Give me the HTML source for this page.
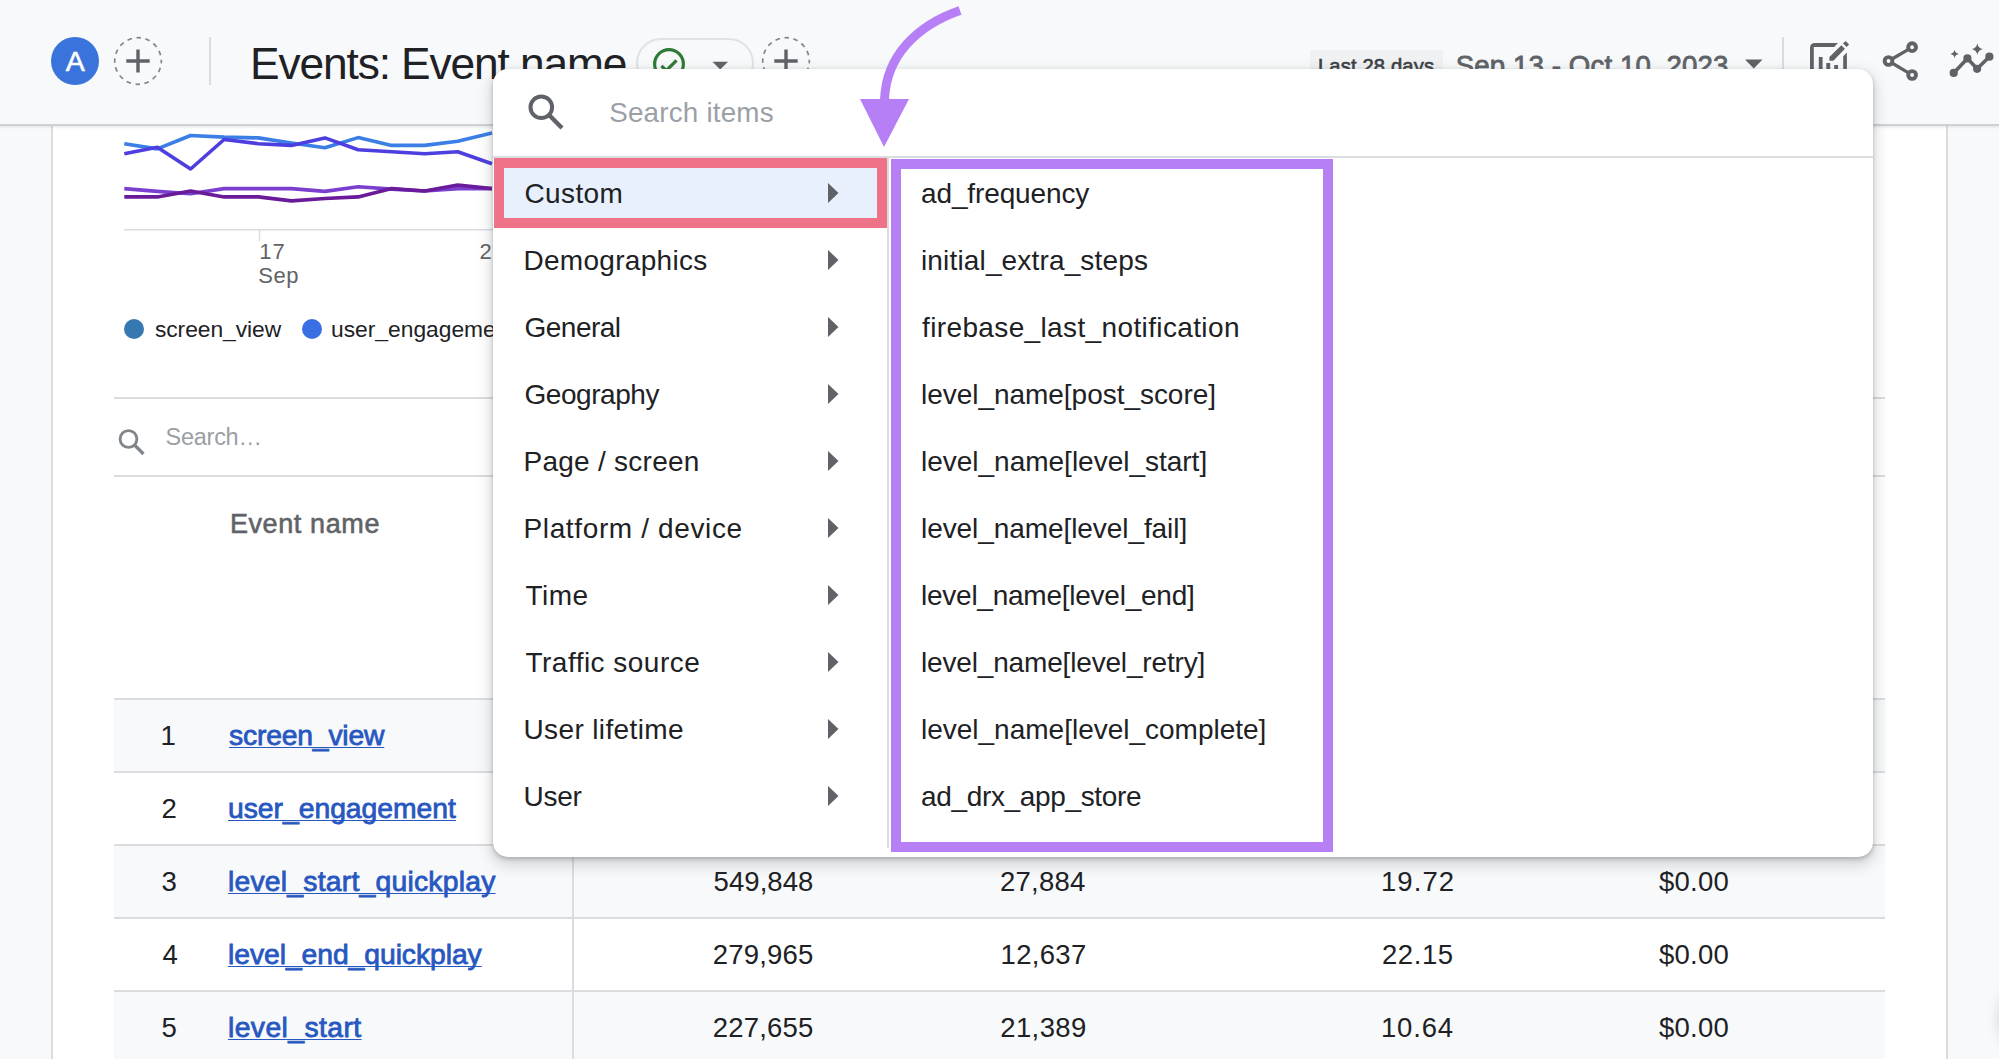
<!DOCTYPE html>
<html><head><meta charset="utf-8"><title>Events: Event name</title>
<style>
html,body{margin:0;padding:0;}
body{width:1999px;height:1059px;overflow:hidden;position:relative;background:#f8f9fa;font-family:"Liberation Sans", sans-serif;}
.t{position:absolute;line-height:1;white-space:nowrap;}
.r{position:absolute;}
</style></head><body>
<div class="r" style="left:0px;top:0px;width:1999px;height:124px;background:#f8f9fa"></div>
<div class="r" style="left:51px;top:125px;width:1897px;height:934px;background:#fff;border-left:2px solid #dadce0;border-right:2px solid #dadce0;box-sizing:border-box"></div>
<div class="r" style="left:0px;top:124px;width:1999px;height:2px;background:#cfd1d3"></div>
<div class="r" style="left:0px;top:126px;width:1999px;height:3px;background:linear-gradient(rgba(60,64,67,.10),rgba(60,64,67,0))"></div>
<div class="r" style="left:51px;top:37px;width:48px;height:48px;background:#3a73dc;border-radius:50%"></div>
<div class="t" style="left:65.70px;top:46.97px;font-size:28.5px;color:#fff;font-weight:normal;letter-spacing:0.000px;-webkit-text-stroke:0.6px #fff">A</div>
<svg class="r" style="left:112px;top:35px" width="52" height="52" viewBox="0 0 52 52"><circle cx="26" cy="26" r="23.3" fill="none" stroke="#80868b" stroke-width="1.7" stroke-dasharray="4.6 4.55" stroke-dashoffset="2.3"/><path d="M14.3 26H37.7M26 14.5V37.5" stroke="#5f6368" stroke-width="3.4"/></svg>
<div class="r" style="left:209px;top:37px;width:2px;height:48px;background:#dadce0"></div>
<div class="t" style="left:250.00px;top:42.19px;font-size:44.3px;color:#202124;font-weight:normal;letter-spacing:-1.123px;">Events: Event name</div>
<div class="r" style="left:636px;top:38px;width:118px;height:50px;border:2px solid #e0e2e5;border-radius:25px;box-sizing:border-box"></div>
<svg class="r" style="left:650px;top:45px" width="40" height="40" viewBox="0 0 40 40"><circle cx="19" cy="19" r="14.4" fill="none" stroke="#2f7a35" stroke-width="3.2"/><path d="M11.5 20.8l4.8 4.8 10.2-10.2" fill="none" stroke="#2f7a35" stroke-width="3.3"/></svg>
<svg class="r" style="left:712px;top:61px" width="17" height="9" viewBox="0 0 17 9"><path d="M0.5 0.8H16L8.2 8.5z" fill="#5f6368"/></svg>
<svg class="r" style="left:759.5px;top:35px" width="52" height="52" viewBox="0 0 52 52"><circle cx="26" cy="26" r="23.3" fill="none" stroke="#80868b" stroke-width="1.7" stroke-dasharray="4.6 4.55" stroke-dashoffset="2.3"/><path d="M14.3 26H37.7M26 14.5V37.5" stroke="#5f6368" stroke-width="3.4"/></svg>
<div class="r" style="left:1310px;top:50px;width:133px;height:40px;background:#f0f1f3"></div>
<div class="t" style="left:1317.90px;top:55.90px;font-size:20.2px;color:#3c4043;font-weight:normal;letter-spacing:0.157px;-webkit-text-stroke:0.6px #3c4043">Last 28 days</div>
<div class="t" style="left:1455.70px;top:51.63px;font-size:27.6px;color:#5f6368;font-weight:normal;letter-spacing:0.133px;-webkit-text-stroke:0.8px #5f6368">Sep 13 - Oct 10, 2023</div>
<svg class="r" style="left:1744px;top:59px" width="20" height="10" viewBox="0 0 20 10"><path d="M1 0.6H18.5L9.75 9.5z" fill="#5f6368"/></svg>
<div class="r" style="left:1782px;top:37px;width:2px;height:48px;background:#dadce0"></div>
<svg class="r" style="left:0;top:0" width="1999" height="100" viewBox="0 0 1999 100"><g fill="none" stroke="#5f6368"></g><g fill="#5f6368"><path d="M1810 90V48.2Q1810 43.1 1815.1 43.1H1837.9L1834.2 46.9H1813.8V90Z"/><path d="M1843.2 56.2L1846.9 52.5V90H1843.2Z"/><path d="M1818.8 57H1822.6V90H1818.8ZM1826.3 63.1H1830.2V90H1826.3ZM1834.2 65H1838V90H1834.2Z"/><path d="M1829.4 56.9L1841.4 45.3L1844.9 48.8L1833.4 60.7H1829.4Z"/><path d="M1843 43.4L1845.6 40.9L1849.1 44.4L1846.5 47Z"/></g><g fill="none" stroke="#5f6368"><circle cx="1912.1" cy="47.2" r="3.9" stroke-width="3.9"/><circle cx="1888.5" cy="61" r="3.9" stroke-width="3.9"/><circle cx="1912.1" cy="75" r="3.9" stroke-width="3.9"/><path d="M1892 59L1908.5 49.4M1892 63L1908.5 72.8" stroke-width="3.2"/><path d="M1953.7 72.9L1967.4 58.4L1977.1 68.8L1989.4 56.7" stroke-width="3.6" stroke-linejoin="round"/></g><g fill="#5f6368"><circle cx="1953.7" cy="72.9" r="4.1"/><circle cx="1967.4" cy="58.4" r="4.1"/><circle cx="1977.1" cy="68.8" r="4.1"/><circle cx="1989.4" cy="56.7" r="4.1"/><path d="M1977.30 43.50Q1978.25 48.15 1982.90 49.10Q1978.25 50.05 1977.30 54.70Q1976.35 50.05 1971.70 49.10Q1976.35 48.15 1977.30 43.50Z"/><path d="M1954.60 49.60Q1955.12 53.38 1958.90 53.90Q1955.12 54.42 1954.60 58.20Q1954.08 54.42 1950.30 53.90Q1954.08 53.38 1954.60 49.60Z"/></g></svg>
<svg class="r" style="left:0;top:0" width="600" height="300" viewBox="0 0 600 300"><path d="M124 229.8H600" stroke="#dadce0" stroke-width="1.6"/><path d="M259.5 230V241" stroke="#dadce0" stroke-width="1.5"/><polyline points="124.3,143.7 157.3,148.9 190.6,135.5 224.1,137.1 258.3,137.9 291.4,143.0 324.9,147.8 358.2,137.6 391.7,145.4 424.7,145.4 457.7,141.2 492.0,132.9" fill="none" stroke="#3b7ee6" stroke-width="3.6" stroke-linejoin="round"/><polyline points="124.3,153.7 157.3,147.3 190.6,169.0 224.1,139.5 258.3,143.7 291.4,145.4 324.9,137.9 358.2,149.7 391.7,151.8 424.7,153.7 457.7,151.8 492.0,163.8" fill="none" stroke="#4d3ee0" stroke-width="3.6" stroke-linejoin="round"/><polyline points="124.3,188.6 157.3,191.4 190.6,193.8 224.1,188.6 258.3,188.6 291.4,188.6 324.9,191.4 358.2,186.7 391.7,189.1 424.7,191.0 457.7,188.6 492.0,188.6" fill="none" stroke="#7b3fcf" stroke-width="3.6" stroke-linejoin="round"/><polyline points="124.3,196.9 157.3,196.9 190.6,191.0 224.1,196.9 258.3,196.9 291.4,200.9 324.9,198.5 358.2,196.9 391.7,188.6 424.7,191.0 457.7,185.0 492.0,188.6" fill="none" stroke="#6a1b9a" stroke-width="3.6" stroke-linejoin="round"/></svg>
<div class="t" style="left:259.20px;top:241.07px;font-size:22px;color:#5f6368;font-weight:normal;letter-spacing:1.165px;">17</div>
<div class="t" style="left:258.20px;top:264.97px;font-size:22px;color:#5f6368;font-weight:normal;letter-spacing:0.595px;">Sep</div>
<div class="t" style="left:479.50px;top:241.07px;font-size:22px;color:#5f6368;font-weight:normal;letter-spacing:0.000px;">2</div>
<div class="r" style="left:124px;top:319px;width:20px;height:20px;background:#3679b0;border-radius:50%"></div>
<div class="t" style="left:154.90px;top:317.60px;font-size:22.8px;color:#202124;font-weight:normal;letter-spacing:-0.044px;">screen_view</div>
<div class="r" style="left:301.5px;top:319px;width:20px;height:20px;background:#3a6fe3;border-radius:50%"></div>
<div class="t" style="left:331.00px;top:317.60px;font-size:22.8px;color:#202124;font-weight:normal;letter-spacing:0.000px;">user_engagement</div>
<div class="r" style="left:114px;top:396.5px;width:1771px;height:2px;background:#dadce0"></div>
<div class="r" style="left:114px;top:475px;width:1771px;height:2px;background:#dadce0"></div>
<svg class="r" style="left:112px;top:424px" width="40" height="36" viewBox="0 0 40 36"><circle cx="16.5" cy="15" r="8.4" fill="none" stroke="#80868b" stroke-width="2.9"/><path d="M22.5 21L31.5 30" stroke="#80868b" stroke-width="3.3"/></svg>
<div class="t" style="left:165.60px;top:426.40px;font-size:23.5px;color:#9aa0a6;font-weight:normal;letter-spacing:-0.276px;">Search…</div>
<div class="t" style="left:229.90px;top:511.14px;font-size:27px;color:#5f6368;font-weight:normal;letter-spacing:0.604px;-webkit-text-stroke:0.6px #5f6368">Event name</div>
<div class="r" style="left:114px;top:698px;width:1771px;height:73px;background:#f8f9fa"></div>
<div class="r" style="left:114px;top:698px;width:1771px;height:2px;background:#dadce0"></div>
<div class="r" style="left:114px;top:771px;width:1771px;height:2px;background:#dadce0"></div>
<div class="r" style="left:114px;top:844px;width:1771px;height:73px;background:#f8f9fa"></div>
<div class="r" style="left:114px;top:844px;width:1771px;height:2px;background:#dadce0"></div>
<div class="r" style="left:114px;top:917px;width:1771px;height:2px;background:#dadce0"></div>
<div class="r" style="left:114px;top:990px;width:1771px;height:73px;background:#f8f9fa"></div>
<div class="r" style="left:114px;top:990px;width:1771px;height:2px;background:#dadce0"></div>
<div class="r" style="left:571.5px;top:476px;width:2px;height:600px;background:#dadce0"></div>
<div class="t" style="left:160.50px;top:722.23px;font-size:27.6px;color:#202124;font-weight:normal;letter-spacing:0.000px;">1</div>
<div class="t" style="left:229.00px;top:720.84px;font-size:28.3px;color:#2757c0;font-weight:normal;letter-spacing:-0.184px;text-decoration:underline;text-underline-offset:2px;text-decoration-thickness:1.3px;text-decoration-skip-ink:none;-webkit-text-stroke:0.8px #2757c0">screen_view</div>
<div class="t" style="left:161.50px;top:795.23px;font-size:27.6px;color:#202124;font-weight:normal;letter-spacing:0.000px;">2</div>
<div class="t" style="left:228.00px;top:793.84px;font-size:28.3px;color:#2757c0;font-weight:normal;letter-spacing:-0.018px;text-decoration:underline;text-underline-offset:2px;text-decoration-thickness:1.3px;text-decoration-skip-ink:none;-webkit-text-stroke:0.8px #2757c0">user_engagement</div>
<div class="t" style="left:161.50px;top:868.23px;font-size:27.6px;color:#202124;font-weight:normal;letter-spacing:0.000px;">3</div>
<div class="t" style="left:228.00px;top:866.84px;font-size:28.3px;color:#2757c0;font-weight:normal;letter-spacing:0.234px;text-decoration:underline;text-underline-offset:2px;text-decoration-thickness:1.3px;text-decoration-skip-ink:none;-webkit-text-stroke:0.8px #2757c0">level_start_quickplay</div>
<div class="t" style="left:713.50px;top:867.52px;font-size:27.5px;color:#202124;font-weight:normal;letter-spacing:0.081px;">549,848</div>
<div class="t" style="left:1000.00px;top:867.52px;font-size:27.5px;color:#202124;font-weight:normal;letter-spacing:0.237px;">27,884</div>
<div class="t" style="left:1380.90px;top:867.52px;font-size:27.5px;color:#202124;font-weight:normal;letter-spacing:1.094px;">19.72</div>
<div class="t" style="left:1659.00px;top:867.52px;font-size:27.5px;color:#202124;font-weight:normal;letter-spacing:0.219px;">$0.00</div>
<div class="t" style="left:162.50px;top:941.23px;font-size:27.6px;color:#202124;font-weight:normal;letter-spacing:0.000px;">4</div>
<div class="t" style="left:228.00px;top:939.84px;font-size:28.3px;color:#2757c0;font-weight:normal;letter-spacing:-0.061px;text-decoration:underline;text-underline-offset:2px;text-decoration-thickness:1.3px;text-decoration-skip-ink:none;-webkit-text-stroke:0.8px #2757c0">level_end_quickplay</div>
<div class="t" style="left:712.75px;top:940.52px;font-size:27.5px;color:#202124;font-weight:normal;letter-spacing:0.206px;">279,965</div>
<div class="t" style="left:1000.50px;top:940.52px;font-size:27.5px;color:#202124;font-weight:normal;letter-spacing:0.337px;">12,637</div>
<div class="t" style="left:1381.90px;top:940.52px;font-size:27.5px;color:#202124;font-weight:normal;letter-spacing:0.594px;">22.15</div>
<div class="t" style="left:1659.00px;top:940.52px;font-size:27.5px;color:#202124;font-weight:normal;letter-spacing:0.219px;">$0.00</div>
<div class="t" style="left:161.50px;top:1014.23px;font-size:27.6px;color:#202124;font-weight:normal;letter-spacing:0.000px;">5</div>
<div class="t" style="left:228.00px;top:1012.84px;font-size:28.3px;color:#2757c0;font-weight:normal;letter-spacing:0.420px;text-decoration:underline;text-underline-offset:2px;text-decoration-thickness:1.3px;text-decoration-skip-ink:none;-webkit-text-stroke:0.8px #2757c0">level_start</div>
<div class="t" style="left:712.75px;top:1013.52px;font-size:27.5px;color:#202124;font-weight:normal;letter-spacing:0.206px;">227,655</div>
<div class="t" style="left:1000.25px;top:1013.52px;font-size:27.5px;color:#202124;font-weight:normal;letter-spacing:0.387px;">21,389</div>
<div class="t" style="left:1380.90px;top:1013.52px;font-size:27.5px;color:#202124;font-weight:normal;letter-spacing:0.844px;">10.64</div>
<div class="t" style="left:1659.00px;top:1013.52px;font-size:27.5px;color:#202124;font-weight:normal;letter-spacing:0.219px;">$0.00</div>
<div class="r" style="left:493px;top:69px;width:1380px;height:788px;background:#fff;border-radius:15px;box-shadow:0 2px 4px rgba(60,64,67,.30),0 6px 14px 3px rgba(60,64,67,.18)"></div>
<svg class="r" style="left:520px;top:86px" width="50" height="50" viewBox="0 0 50 50"><circle cx="21.3" cy="21.3" r="10.8" fill="none" stroke="#5f6368" stroke-width="4"/><path d="M29.3 29.3L42 42" stroke="#5f6368" stroke-width="4.4"/></svg>
<div class="t" style="left:609.20px;top:99.46px;font-size:27.8px;color:#9aa0a6;font-weight:normal;letter-spacing:0.199px;">Search items</div>
<div class="r" style="left:493px;top:156px;width:1380px;height:2px;background:#dadce0"></div>
<div class="r" style="left:887px;top:157px;width:2px;height:691px;background:#dadce0"></div>
<div class="r" style="left:494px;top:158px;width:393px;height:70px;background:#e8f0fe"></div>
<div class="r" style="left:494px;top:158px;width:393px;height:69.5px;border:10px solid #ee7389;box-sizing:border-box"></div>
<div class="t" style="left:524.50px;top:179.69px;font-size:28px;color:#202124;font-weight:normal;letter-spacing:0.371px;">Custom</div>
<svg class="r" style="left:827px;top:182px" width="13" height="22" viewBox="0 0 13 22"><path d="M1 1L11.5 11L1 21z" fill="#5f6368"/></svg>
<div class="t" style="left:921.00px;top:179.69px;font-size:28px;color:#202124;font-weight:normal;letter-spacing:-0.126px;">ad_frequency</div>
<div class="t" style="left:523.50px;top:246.69px;font-size:28px;color:#202124;font-weight:normal;letter-spacing:0.289px;">Demographics</div>
<svg class="r" style="left:827px;top:249px" width="13" height="22" viewBox="0 0 13 22"><path d="M1 1L11.5 11L1 21z" fill="#5f6368"/></svg>
<div class="t" style="left:921.00px;top:246.69px;font-size:28px;color:#202124;font-weight:normal;letter-spacing:0.154px;">initial_extra_steps</div>
<div class="t" style="left:524.50px;top:313.69px;font-size:28px;color:#202124;font-weight:normal;letter-spacing:-0.515px;">General</div>
<svg class="r" style="left:827px;top:316px" width="13" height="22" viewBox="0 0 13 22"><path d="M1 1L11.5 11L1 21z" fill="#5f6368"/></svg>
<div class="t" style="left:922.00px;top:313.69px;font-size:28px;color:#202124;font-weight:normal;letter-spacing:0.371px;">firebase_last_notification</div>
<div class="t" style="left:524.50px;top:380.69px;font-size:28px;color:#202124;font-weight:normal;letter-spacing:-0.442px;">Geography</div>
<svg class="r" style="left:827px;top:383px" width="13" height="22" viewBox="0 0 13 22"><path d="M1 1L11.5 11L1 21z" fill="#5f6368"/></svg>
<div class="t" style="left:921.00px;top:380.69px;font-size:28px;color:#202124;font-weight:normal;letter-spacing:-0.035px;">level_name[post_score]</div>
<div class="t" style="left:523.50px;top:447.69px;font-size:28px;color:#202124;font-weight:normal;letter-spacing:0.258px;">Page / screen</div>
<svg class="r" style="left:827px;top:450px" width="13" height="22" viewBox="0 0 13 22"><path d="M1 1L11.5 11L1 21z" fill="#5f6368"/></svg>
<div class="t" style="left:921.00px;top:447.69px;font-size:28px;color:#202124;font-weight:normal;letter-spacing:-0.009px;">level_name[level_start]</div>
<div class="t" style="left:523.50px;top:514.69px;font-size:28px;color:#202124;font-weight:normal;letter-spacing:0.634px;">Platform / device</div>
<svg class="r" style="left:827px;top:517px" width="13" height="22" viewBox="0 0 13 22"><path d="M1 1L11.5 11L1 21z" fill="#5f6368"/></svg>
<div class="t" style="left:921.00px;top:514.69px;font-size:28px;color:#202124;font-weight:normal;letter-spacing:-0.073px;">level_name[level_fail]</div>
<div class="t" style="left:525.50px;top:581.69px;font-size:28px;color:#202124;font-weight:normal;letter-spacing:0.430px;">Time</div>
<svg class="r" style="left:827px;top:584px" width="13" height="22" viewBox="0 0 13 22"><path d="M1 1L11.5 11L1 21z" fill="#5f6368"/></svg>
<div class="t" style="left:921.00px;top:581.69px;font-size:28px;color:#202124;font-weight:normal;letter-spacing:-0.243px;">level_name[level_end]</div>
<div class="t" style="left:525.50px;top:648.69px;font-size:28px;color:#202124;font-weight:normal;letter-spacing:0.478px;">Traffic source</div>
<svg class="r" style="left:827px;top:651px" width="13" height="22" viewBox="0 0 13 22"><path d="M1 1L11.5 11L1 21z" fill="#5f6368"/></svg>
<div class="t" style="left:921.00px;top:648.69px;font-size:28px;color:#202124;font-weight:normal;letter-spacing:-0.165px;">level_name[level_retry]</div>
<div class="t" style="left:523.50px;top:715.69px;font-size:28px;color:#202124;font-weight:normal;letter-spacing:0.374px;">User lifetime</div>
<svg class="r" style="left:827px;top:718px" width="13" height="22" viewBox="0 0 13 22"><path d="M1 1L11.5 11L1 21z" fill="#5f6368"/></svg>
<div class="t" style="left:921.00px;top:715.69px;font-size:28px;color:#202124;font-weight:normal;letter-spacing:-0.006px;">level_name[level_complete]</div>
<div class="t" style="left:523.50px;top:782.69px;font-size:28px;color:#202124;font-weight:normal;letter-spacing:-0.264px;">User</div>
<svg class="r" style="left:827px;top:785px" width="13" height="22" viewBox="0 0 13 22"><path d="M1 1L11.5 11L1 21z" fill="#5f6368"/></svg>
<div class="t" style="left:921.00px;top:782.69px;font-size:28px;color:#202124;font-weight:normal;letter-spacing:-0.343px;">ad_drx_app_store</div>
<div class="r" style="left:891px;top:159px;width:442px;height:693px;border:10px solid #b77ff6;box-sizing:border-box"></div>
<svg class="r" style="left:0;top:0" width="1000" height="160" viewBox="0 0 1000 160"><path d="M960 10.5C918 25 886 55 884.5 100" fill="none" stroke="#b77ff6" stroke-width="9"/><path d="M860 99H909L884 147z" fill="#b77ff6"/></svg>
<div class="r" style="left:2001px;top:975px;width:80px;height:80px;background:#fff;border-radius:50%;box-shadow:0 1px 3px rgba(60,64,67,.3),0 4px 12px 4px rgba(60,64,67,.15)"></div>
</body></html>
